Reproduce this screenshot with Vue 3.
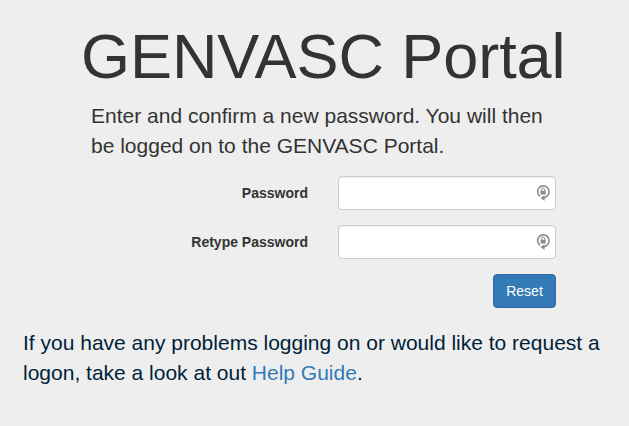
<script setup>
import { ref } from 'vue'
const fields = ref([
  { id: 'password', label: 'Password', value: '' },
  { id: 'retype', label: 'Retype Password', value: '' },
])
</script>

<template>
  <main class="jumbotron">
    <h1>GENVASC Portal</h1>
    <p class="intro">Enter and confirm a new password. You will then<br />be logged on to the GENVASC Portal.</p>
    <form @submit.prevent>
      <div v-for="f in fields" :key="f.id" class="row">
        <label :for="f.id">{{ f.label }}</label>
        <div class="control">
          <input :id="f.id" v-model="f.value" type="password" />
          <svg class="lock" width="16" height="18" viewBox="0 0 16 18" fill="none">
            <path d="M5 12.3A5.7 5.8 0 1 1 12 12.1Q10.8 13.6 8.5 14" stroke="#8c8c8c" stroke-width="1.6" />
            <path d="M9.5 11.3v5.7L5.5 14.1z" fill="#8c8c8c" />
            <rect x="5.5" y="6.7" width="5.2" height="3.8" fill="#8c8c8c" />
            <path d="M6.6 7V5.5a1.5 1.5 0 0 1 3 0V7" stroke="#8c8c8c" />
          </svg>
        </div>
      </div>
      <button type="submit">Reset</button>
    </form>
    <p class="help">If you have any problems logging on or would like to request a<br />logon, take a look at out <a href="#">Help Guide</a>.</p>
  </main>
</template>

<style>
body { background: #eee; }
</style>
<style scoped>
.jumbotron { box-sizing: border-box; height: 426px; overflow: hidden; padding-top: 21px; background: #eee; color: #333; font: 14px/20px "Liberation Sans", Arial, sans-serif; }
h1 { margin: 0 0 10px 81px; font-size: 63px; line-height: 70px; font-weight: 400; letter-spacing: -.07px; white-space: nowrap; }
.intro, .help { margin: 0; font-size: 21px; line-height: 30px; white-space: nowrap; }
.intro { margin-left: 91px; }
form { display: flex; flex-direction: column; gap: 15px; width: 556px; margin-top: 15px; }
.row { display: flex; align-items: center; justify-content: flex-end; gap: 30px; height: 34px; }
label { font-weight: 700; }
.control { position: relative; width: 218px; height: 34px; }
input { box-sizing: border-box; display: block; width: 100%; height: 34px; padding: 6px 12px; border: 1px solid #ccc; border-radius: 4px; background: #fff; box-shadow: inset 0 1px 1px rgba(0,0,0,.075); outline: 0; }
.lock { position: absolute; left: 197px; top: 8px; }
button { align-self: flex-end; width: 63px; height: 34px; padding: 0; border: 1px solid #2e6da4; border-radius: 4px; background: #337ab7; color: #fff; font: inherit; }
.help { margin: 20px 0 0 23px; color: #001f3a; }
a { color: #337ab7; text-decoration: none; }
</style>
